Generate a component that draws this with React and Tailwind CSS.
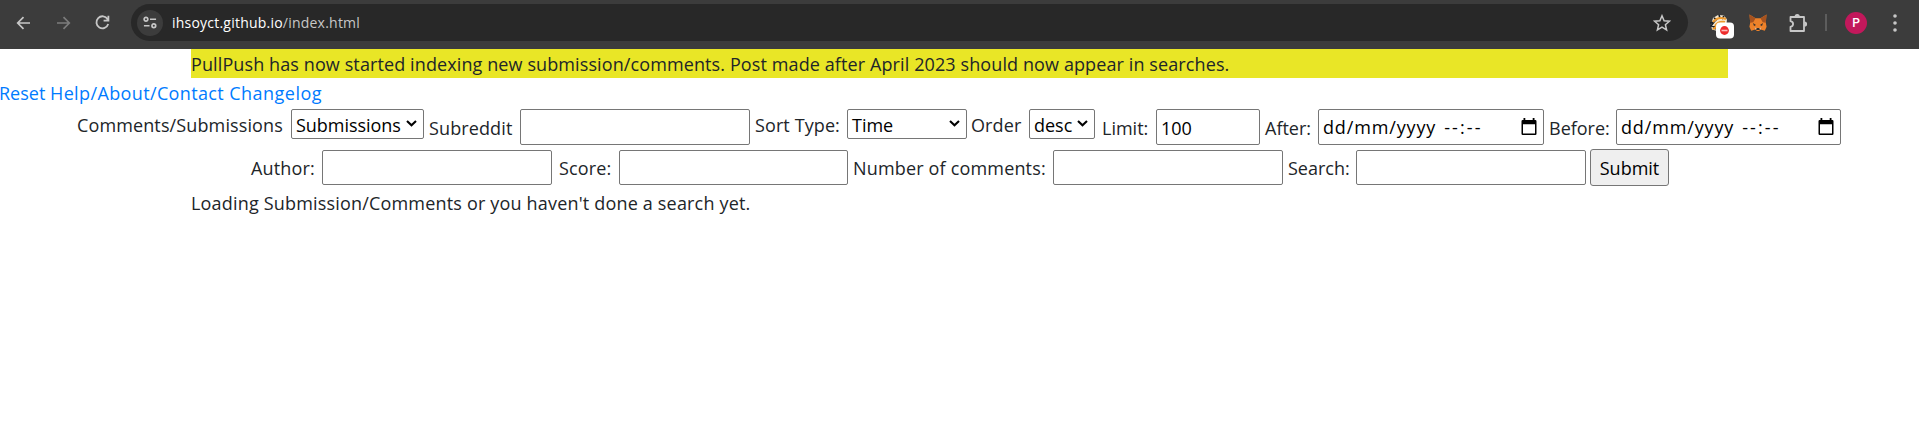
import React from "react";

const Chevron = () => (
  <svg width="11" height="7" viewBox="0 0 11 7" className="mb-px shrink-0" fill="none" stroke="#000" strokeWidth="2.1"><path d="M1 1 5.500 5.300 10 1" /></svg>
);

const Calendar = () => (
  <svg width="16" height="18" viewBox="0 0 16 18" className="mb-px shrink-0" fill="#000" fillRule="evenodd"><path d="M2.5 0h1.8v2h7.4V0h1.8v2h.8q1.2 0 1.2 1.2v12.6q0 1.2-1.2 1.2H1.7Q.5 17 .5 15.8V3.2Q.5 2 1.7 2h.8ZM2 6.2v9.3h12V6.2Z" /></svg>
);

const Label = ({ w, t, y = "pt-[2px]", children }) => (
  <label className={`shrink-0 whitespace-nowrap text-[18px] leading-7 ${y} ${w} ${t}`}>{children}</label>
);

const Select = ({ w, t, children }) => (
  <div className={`flex h-[30px] shrink-0 items-center justify-between rounded-[2px] border border-[#767676] bg-white pr-[6px] pl-1 text-[18px] leading-7 text-black ${w}`}>
    <span className={`whitespace-nowrap pt-[2px] ${t}`}>{children}</span>
    <Chevron />
  </div>
);

const Field = ({ w, h, value }) => (
  <input className={`shrink-0 rounded-[2px] border border-[#767676] bg-white px-1 pt-[2px] text-[18px] leading-7 text-black outline-none ${h} ${w}`} defaultValue={value} />
);

const DateField = ({ w }) => (
  <div className={`flex h-9 shrink-0 items-center justify-between rounded-[2px] border border-[#767676] bg-white pr-[6px] pl-1 text-[18px] leading-7 text-black ${w}`}>
    <span className="flex gap-[8px] whitespace-nowrap">
      <span className="tracking-[0.85px]">dd/mm/yyyy</span>
      <span className="tracking-[2.1px]">--:--</span>
    </span>
    <Calendar />
  </div>
);

const Toolbar = () => (
  <header className="flex h-[49px] items-start bg-[#3c3c3c] pt-1 text-[#c7c7c7]">
    <div className="flex h-[37px] w-[131px] shrink-0 items-center pl-4">
      <svg width="15" height="14" viewBox="0 0 15 14" fill="none" stroke="currentColor" strokeWidth="1.7"><path d="M14 7H2M7.5 1.2 1.7 7l5.8 5.8" /></svg>
      <svg width="15" height="14" viewBox="0 0 15 14" className="ml-[25px]" fill="none" stroke="#7c7c7c" strokeWidth="1.7"><path d="M1 7h12M7.5 1.2 13.3 7l-5.8 5.8" /></svg>
      <svg width="15" height="15" viewBox="0 0 15 15" className="ml-[24px]" fill="none" stroke="currentColor" strokeWidth="1.8"><path d="M12.6 4.2A6 6 0 1 0 13.2 9M13.4.8v4.9H8.6" /></svg>
    </div>
    <div className="flex h-[37px] w-[1557px] shrink-0 items-center rounded-full bg-[#282828] pr-[17px] pl-[6px]">
      <div className="flex size-[26px] items-center justify-center rounded-full bg-[#3c3c3c]">
        <svg width="14" height="13" viewBox="0 0 15 13" fill="none" stroke="currentColor" strokeWidth="1.8"><circle cx="3.2" cy="3" r="2" /><path d="M7.5 3H14M1 10h6" /><circle cx="11.6" cy="10" r="2" /></svg>
      </div>
      <div className="ml-[9px] flex-1 font-['Open_Sans','Noto_Sans',sans-serif] text-[14px] leading-5 tracking-[0.22px] text-[#c7c7c7]"><span className="text-white">ihsoyct.github.io</span>/index.html</div>
      <svg width="18" height="18" viewBox="0 0 18 18" fill="none" stroke="currentColor" strokeWidth="1.5"><path d="m9 1.8 2.1 5 5.3.4-4 3.5 1.2 5.2L9 13.1l-4.6 2.8 1.2-5.2-4-3.5 5.3-.4Z" /></svg>
    </div>
    <div className="flex h-[37px] items-center pl-[22px]">
      <svg width="24" height="26" viewBox="0 0 24 26" className="mt-[9px]">
        <path d="M1 11 3 4l5-3 6 .5 3 4-1 8-7 4-7-2Z" fill="#f6e9d2" />
        <path d="m0 9 4-1-3 4 4 1M4 4l3 2M9 1l1 3M14 2l-2 3M3 14l4 1" fill="none" stroke="#18202a" strokeWidth="1.6" />
        <path d="M3 8q5-6 13-3M5 12q3-5 10-4M3 15l5-3" fill="none" stroke="#ed982d" strokeWidth="2.2" />
        <rect x="6" y="8.5" width="18" height="16" rx="4" fill="#fff" />
        <circle cx="14.5" cy="16.5" r="4.4" fill="#ee2c2c" /><path d="M11.5 16.5h6" stroke="#fbb" strokeWidth="1.6" />
      </svg>
      <svg width="18" height="18" viewBox="0 0 18 18" className="ml-[15px]">
        <path d="m.5.5 6 3.7h5l6-3.7-.7 8.2.8 4-1.8 4-4.2-1.2-1.5 1.6H7.9l-1.5-1.6-4.2 1.2-1.8-4 .8-4Z" fill="#ed8129" />
        <path d="m.5.5 6 3.7-2.2 4-3.1.5ZM17.5.5l-6 3.7 2.2 4 3.1.5Z" fill="#a6521f" />
        <path d="m4 9 3 2-2 1ZM14 9l-3 2 2 1ZM7.5 14h3l.4 2H7.1Z" fill="#33302f" />
        <path d="m5.5 13.5 2 .5-.5 2ZM12.5 13.5l-2 .5.5 2Z" fill="#d9bca3" />
      </svg>
      <svg width="19" height="20" viewBox="0 0 19 20" className="ml-[22px]" fill="none" stroke="currentColor" strokeWidth="1.8"><path d="M1.5 4H15v14H1.5v-4.2q2.6-.5 2.6-2.8T1.5 8.2Z" strokeLinejoin="round" /><path d="M6.5 3.5a1.7 1.7 0 0 1 3.4 0M15.5 9.3a1.7 1.7 0 0 1 0 3.4" fill="currentColor" /></svg>
      <div className="ml-[17px] h-[17px] w-[2px] bg-[#5d5d5d]" />
      <div className="ml-[18px] flex size-[22px] items-center justify-center rounded-full bg-[#c2185b] font-[Roboto,sans-serif] text-[12px] leading-none font-medium text-white">P</div>
      <svg width="4" height="18" viewBox="0 0 4 18" className="ml-[26px]" fill="currentColor"><circle cx="2" cy="2" r="1.8" /><circle cx="2" cy="9" r="1.8" /><circle cx="2" cy="16" r="1.8" /></svg>
    </div>
  </header>
);

export default function App() {
  return (
    <div className="h-[433px] w-[1919px] overflow-hidden bg-white font-['Open_Sans','Noto_Sans',sans-serif] text-[18px] text-[#212529]">
      <Toolbar />
      <div className="ml-[191px] h-[29px] w-[1537px] bg-[#e9e626] pt-[1px] leading-7 tracking-[0.105px] whitespace-nowrap"><span>PullPush has now started indexing new submission/comments. Post made after April 2023 should now appear in searches.</span></div>
      <nav className="-ml-px flex h-[31px] gap-[5px] pt-[1px] leading-7 text-[#007bff]">
        <a className="w-[46px]">Reset</a><a className="tracking-[0.37px]">Help/About/Contact</a><a className="tracking-[0.5px]">Changelog</a>
      </nav>
      <div className="flex h-[41px] items-start pl-[77px]">
        <Label w="w-[214px]" t="tracking-[0.12px]">Comments/Submissions</Label>
        <Select w="w-[133px]" t="tracking-[-0.05px]">Submissions</Select>
        <Label w="ml-[5px] w-[91px]" t="tracking-[0.12px]" y="pt-[5px]">Subreddit</Label>
        <Field w="w-[230px]" h="h-9" />
        <Label w="ml-[5px] w-[92px]" t="tracking-[0.1px]">Sort Type:</Label>
        <Select w="w-[120px]" t="">Time</Select>
        <Label w="ml-[4px] w-[58px]" t="tracking-[0.1px]">Order</Label>
        <Select w="w-[66px]" t="">desc</Select>
        <Label w="ml-[7px] w-[54px]" t="" y="pt-[5px]">Limit:</Label>
        <Field w="w-[104px]" h="h-9" value="100" />
        <Label w="ml-[5px] w-[53px]" t="" y="pt-[5px]">After:</Label>
        <DateField w="w-[226px]" />
        <Label w="ml-[5px] w-[67px]" t="" y="pt-[5px]">Before:</Label>
        <DateField w="w-[225px]" />
      </div>
      <div className="flex h-[39px] items-start pl-[251px]">
        <Label w="w-[71px]" t="tracking-[0.15px]" y="pt-[4px]">Author:</Label>
        <Field w="w-[230px]" h="h-[35px]" />
        <Label w="ml-[7px] w-[60px]" t="tracking-[0.15px]" y="pt-[4px]">Score:</Label>
        <Field w="w-[229px]" h="h-[35px]" />
        <Label w="ml-[5px] w-[200px]" t="tracking-[0.17px]" y="pt-[4px]">Number of comments:</Label>
        <Field w="w-[230px]" h="h-[35px]" />
        <Label w="ml-[5px] w-[68px]" t="" y="pt-[4px]">Search:</Label>
        <Field w="w-[230px]" h="h-[35px]" />
        <button className="-mt-px ml-1 h-[37px] w-[79px] rounded-[3px] border border-[#767676] bg-[#efefef] pt-[2px] text-[18px] text-black">Submit</button>
      </div>
      <p className="pl-[191px] leading-7 tracking-[0.18px]"><span>Loading Submission/Comments or you haven't done a search yet.</span></p>
    </div>
  );
}
